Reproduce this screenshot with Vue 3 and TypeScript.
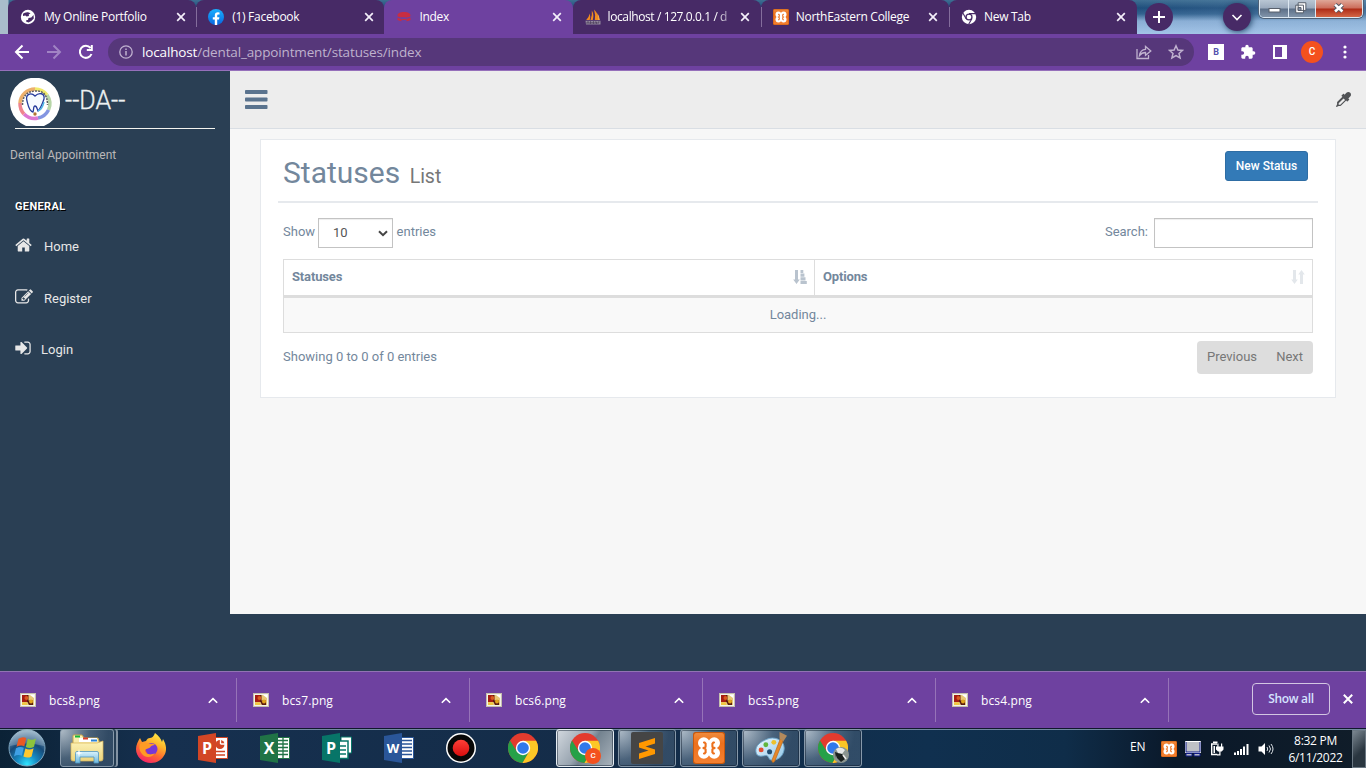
<script setup lang="ts">
interface Tab { title: string; icon: string; active?: boolean; line?: boolean; fade?: boolean }
const tabs: Tab[] = [
  { title: 'My Online Portfolio', icon: 'globe', line: true },
  { title: '(1) Facebook', icon: 'facebook' },
  { title: 'Index', icon: 'index', active: true },
  { title: 'localhost / 127.0.0.1 / d', icon: 'pma', line: true, fade: true },
  { title: 'NorthEastern College', icon: 'xampp', line: true },
  { title: 'New Tab', icon: 'chromemono' },
]
const downloads: string[] = ['bcs8.png', 'bcs7.png', 'bcs6.png', 'bcs5.png', 'bcs4.png']
interface MenuItem { label: string; icon: string; box: string; width: number }
const menu: MenuItem[] = [
  {
    label: 'Home', box: '0 0 1664 1792', width: 17,
    icon: 'M1408 992v480q0 26-19 45t-45 19h-384v-384h-256v384h-384q-26 0-45-19t-19-45v-480q0-1 .5-3t.5-3l575-474 575 474q1 2 1 6zm223-69l-62 74q-8 9-21 11h-3q-13 0-21-7l-692-577-692 577q-12 8-24 7-13-2-21-11l-62-74q-8-10-7-23.5t11-21.5l719-599q32-26 76-26t76 26l244 204v-195q0-14 9-23t23-9h192q14 0 23 9t9 23v408l219 182q10 8 11 21.5t-7 23.5z',
  },
  {
    label: 'Register', box: '0 0 1792 1792', width: 18,
    icon: 'M888 1184l116-116-152-152-116 116v56h96v96h56zm440-720q-16-16-33 1l-350 350q-17 17-1 33t33-1l350-350q17-17 1-33zm80 594v190q0 119-84.5 203.5t-203.5 84.5h-832q-119 0-203.5-84.5t-84.5-203.5v-832q0-119 84.5-203.5t203.5-84.5h832q63 0 117 25 15 7 18 23 3 17-9 29l-49 49q-14 14-32 8-23-6-45-6h-832q-66 0-113 47t-47 113v832q0 66 47 113t113 47h832q66 0 113-47t47-113v-126q0-13 9-22l64-64q15-15 35-7t20 29zm-96-738l288 288-672 672h-288v-288zm444 132l-92 92-288-288 92-92q28-28 68-28t68 28l152 152q28 28 28 68t-28 68z',
  },
  {
    label: 'Login', box: '0 0 1536 1792', width: 16,
    icon: 'M1184 896q0 26-19 45l-544 544q-19 19-45 19t-45-19-19-45v-288h-448q-26 0-45-19t-19-45v-384q0-26 19-45t45-19h448v-288q0-26 19-45t45-19 45 19l544 544q19 19 19 45zm352-352v704q0 119-84.5 203.5t-203.5 84.5h-320q-13 0-22.5-9.5t-9.5-22.5q0-4-1-20t-.5-26.5 3-23.5 10-19.5 20.5-6.5h320q66 0 113-47t47-113v-704q0-66-47-113t-113-47h-312l-11.5-1-11.5-3-8-5.5-7-9-2-13.5q0-4-1-20t-.5-26.5 3-23.5 10-19.5 20.5-6.5h320q119 0 203.5 84.5t84.5 203.5z',
  },
]
interface Task { icon: string; state?: string; letter?: string; badge?: string }
const tasks: Task[] = [
  { icon: 'explorer', state: 'open stacked' },
  { icon: 'firefox' },
  { icon: 'powerpoint', letter: 'P' },
  { icon: 'excel', letter: 'X' },
  { icon: 'publisher', letter: 'P' },
  { icon: 'word', letter: 'W' },
  { icon: 'record' },
  { icon: 'chrome' },
  { icon: 'chrome', state: 'open current', badge: 'C' },
  { icon: 'sublime', state: 'open' },
  { icon: 'xampp', state: 'open' },
  { icon: 'paint', state: 'open' },
  { icon: 'chrome', state: 'open', badge: 'photo' },
]
</script>

<template>
  <div class="screen">
    <svg class="defs" width="0" height="0" aria-hidden="true">
      <defs>
        <linearGradient id="fb" x2="0" y2="1"><stop stop-color="#19b0ff" /><stop offset="1" stop-color="#0866e0" /></linearGradient>
        <linearGradient id="xo" x2="0" y2="1"><stop stop-color="#f08a3c" /><stop offset=".35" stop-color="#ec701c" /><stop offset="1" stop-color="#f58030" /></linearGradient>
        <linearGradient id="fox" x1=".8" x2=".3" y2="1"><stop stop-color="#fff04a" /><stop offset=".35" stop-color="#ffb52a" /><stop offset=".65" stop-color="#ff6a30" /><stop offset="1" stop-color="#f5206a" /></linearGradient>
        <linearGradient id="folder" x2="0" y2="1"><stop stop-color="#fdf3b8" /><stop offset="1" stop-color="#ecd47c" /></linearGradient>
        <linearGradient id="glass" x2="0" y2="1"><stop stop-color="#d8f2fc" /><stop offset="1" stop-color="#6fb9de" /></linearGradient>
        <radialGradient id="orb" cx=".5" cy=".95" r=".95"><stop stop-color="#2fe5ff" /><stop offset=".3" stop-color="#1689c2" /><stop offset=".62" stop-color="#174a78" /><stop offset="1" stop-color="#8faec4" /></radialGradient>
        <linearGradient id="pal" x2="1" y2="1"><stop stop-color="#eef8ff" /><stop offset="1" stop-color="#8fc6e8" /></linearGradient>
        <linearGradient id="redrec" x2="0" y2="1"><stop stop-color="#ff4038" /><stop offset="1" stop-color="#d80d0d" /></linearGradient>
      </defs>
      <symbol id="i-globe" viewBox="0 0 16 16"><circle cx="8" cy="8" r="7.200" fill="#fff" /><path d="M3 4.800q2-1.800 5-1.500l2.500 1-1.800 1.200L9 7 6.500 7.600 5.500 6.500 3 7zM8.500 9l2.800-.5 2.200-2.500.3 3.500-2.500 2.500-2.800 1.500-2.500-1 .5-1.500H8z" fill="#472a66" /></symbol>
      <symbol id="i-facebook" viewBox="0 0 16 16"><circle cx="8" cy="8" r="8" fill="url(#fb)" /><path d="M6.800 16v-5.500h-2V8.200h2V6.500c0-2.100 1.200-3.200 3-3.200l1.700.1v2h-1c-1 0-1.300.5-1.300 1.200v1.600h2.200l-.4 2.300H9.200V16z" fill="#fff" /></symbol>
      <symbol id="i-index" viewBox="0 0 16 16"><path d="M1.500 6.500C1.500 4.500 4 3 8 3s6.500 1.500 6.500 3.500S11 8.500 8 8.300 1.500 8.500 1.500 6.500zM1.500 8.500q1.500 1.200 4 1.300v2.400q-2-.1-4-1.200zM6 10h4v1H6zM10.500 9.800q2.500-.1 4-1.300V11q-1.500 1.100-4 1.200z" fill="#c82d42" /></symbol>
      <symbol id="i-pma" viewBox="0 0 16 16"><path d="M6.800 1.500q2.500 4 1 9.500H5.500q2-5 1.300-9.500zM9 .5q4 4 5.500 10.500H9.800q1-5-.8-10.500zM4.700 4.500q1 3 0 6.500H1.200q2.700-2.500 3.500-6.500z" fill="#f08a20" /><path d="M12.300 4q2.200 3 2.500 7h-1.600q.3-3-.9-7z" fill="#f9b04d" /><path d="M.5 11.800h15v3.700H1z" fill="#93899e" /><path d="M2 15v-2h2v2M5.500 15v-2.500l1.500 2 1.500-2V15M10 15v-2h1.500v2M13 15v-2h1.500" stroke="#433352" fill="none" stroke-width=".7" /></symbol>
      <symbol id="i-xampp" viewBox="0 0 32 32">
        <rect width="32" height="32" rx="2.500" fill="#c8590d" /><rect x="1" y="1" width="30" height="30" rx="2.500" fill="url(#xo)" />
        <g fill="#fff"><circle cx="10.800" cy="11" r="5.800" /><circle cx="21.200" cy="11" r="5.800" /><circle cx="10.800" cy="21" r="5.800" /><circle cx="21.200" cy="21" r="5.800" /><path d="M8 11h16v10H8z" /></g>
        <path d="M11 10.500h.6l1 1.200v2.800q0 1.500-3 1.500 3 0 3 1.500v2.800l-1 1.200h-.6M21 10.500h-.6l-1 1.200v2.800q0 1.500 3 1.500-3 0-3 1.500v2.800l1 1.200h.6" fill="none" stroke="#ec701c" stroke-width="2.100" stroke-linecap="round" />
      </symbol>
      <symbol id="i-chromemono" viewBox="0 0 16 16"><circle cx="8" cy="8" r="7.200" fill="#fff" /><circle cx="8" cy="8" r="3.600" fill="#472a66" /><circle cx="8" cy="8" r="2.300" fill="#fff" /><path d="M8 4.600h7M10.900 9.700 7.500 15.500M5.100 9.700 1.700 3.800" stroke="#472a66" stroke-width="1.100" /></symbol>
      <symbol id="i-chrome" viewBox="0 0 30 30"><circle cx="15" cy="15" r="15" fill="#e33b2e" /><path d="M2 7.500 8.800 18.600 15 22l6.200-3.400L14.500 30A15 15 0 0 1 2 7.500z" fill="#26a148" /><path d="M15 7.800h13.100A15 15 0 0 1 14.500 30l6.700-11.400z" fill="#fcc726" /><circle cx="15" cy="15" r="7.200" fill="#fff" /><circle cx="15" cy="15" r="5.800" fill="#3079eb" /></symbol>
      <symbol id="i-firefox" viewBox="0 0 30 30"><path d="M19 0c4 3 6 6 7 9l1-3c3 5 4 10 2 15-3 6-8 9-14 9C7 30 0 24 0 16c0-4 2-8 4-11l2 4 4-1c1-2 2-3 4-3 3 0 4-3 5-5z" fill="url(#fox)" /><circle cx="15.500" cy="16" r="6" fill="#7838d5" /><path d="M4 11c4-2 8-1 10 0 2-.5 4 0 5 1-3 0-4 1-5 2.500-2 1.500-4 1-5 2.500 0 4 5 6 10 3-3 5-10 5-13 1C3 17 3 14 4 11z" fill="#ff9b25" /></symbol>
      <symbol id="i-explorer" viewBox="0 0 34 32"><path d="M3 4q0-1 1-1h8l2 3h14l1 3v19H3z" fill="url(#folder)" stroke="#c9a64a" /><rect x="5" y="3.500" width="5" height="2" fill="#17b53a" /><path d="M9 6h18v4H9z" fill="#fff" /><rect x="13" y="5.500" width="5" height="2" fill="#d8402e" /><rect x="21" y="7.500" width="6" height="2" fill="#2c83d8" /><path d="M1 11h26l6-2v18q0 2-2 2H3q-2 0-2-2z" fill="url(#folder)" stroke="#d8b45a" stroke-width=".7" /><path d="M5.500 31V21q0-1.500 1.500-1.500h20q1.500 0 1.500 1.500v10h-4.500v-6H10v6z" fill="url(#glass)" stroke="#4e94bf" stroke-width=".8" /><path d="m9 17 .8 3.200 3.200.8-3.200.8L9 25l-.8-3.200L5 21l3.200-.8z" fill="#fff" /></symbol>
      <symbol id="i-powerpoint" viewBox="0 0 30 30"><path d="M16 4.500h13.500v21H16z" fill="#fff" stroke="#d24625" /><circle cx="22" cy="11.500" r="4.500" fill="#d24625" /><path d="M22.500 11V6M22.500 11h5" stroke="#fff" stroke-width="1.300" /><path d="M18 18.500h9M18 22h9" stroke="#d24625" stroke-width="1.600" /><path d="M0 3 18 0v30L0 27z" fill="#d24625" /></symbol>
      <symbol id="i-excel" viewBox="0 0 30 30"><path d="M16 4.500h13.500v21H16z" fill="#fff" stroke="#207346" /><path d="M18 7.500h10M18 11h10M18 14.500h10M18 18h10M18 21.500h10M23 5v20" stroke="#207346" stroke-width="1.300" /><path d="M0 3 18 0v30L0 27z" fill="#207346" /></symbol>
      <symbol id="i-publisher" viewBox="0 0 30 30"><path d="M19 4h10.500v16H19z" fill="#fff" stroke="#077568" /><path d="M16 8h10v17.500H16z" fill="#fff" stroke="#077568" stroke-width="1.500" /><path d="M18 13h6M18 17h6M18 21h6" stroke="#077568" stroke-width="1.500" /><path d="M0 3 18 0v30L0 27z" fill="#077568" /></symbol>
      <symbol id="i-word" viewBox="0 0 30 30"><path d="M16 4.500h13.500v21H16z" fill="#fff" stroke="#2a5699" /><path d="M18 7.500h10M18 11h10M18 14.500h10M18 18h10M18 21.500h10" stroke="#2a5699" stroke-width="1.400" /><path d="M0 3 18 0v30L0 27z" fill="#2a5699" /></symbol>
      <symbol id="i-record" viewBox="0 0 30 30"><circle cx="15" cy="15" r="15" fill="#fff" /><circle cx="15" cy="15" r="13.500" fill="#080808" /><circle cx="15" cy="15" r="8.300" fill="url(#redrec)" /></symbol>
      <symbol id="i-sublime" viewBox="0 0 32 32"><rect width="32" height="32" rx="2" fill="#454545" /><path d="M8 11 24 6v5.500L14.500 14.500 24 17.500V22L8 27v-5.500l9.500-3L8 15.500z" fill="#ff9800" /></symbol>
      <symbol id="i-paint" viewBox="0 0 34 34"><path d="M12 8C20 4 31 8 31 17c0 6-4 13-13 13-4 0-3-5-6-5S2 28 1 21 7 10 12 8z" fill="url(#pal)" stroke="#6ca5ca" /><circle cx="6.500" cy="19" r="2.600" fill="#e34e32" /><circle cx="11.500" cy="13.500" r="2.600" fill="#61b63c" /><circle cx="20" cy="11" r="2.600" fill="#edc12c" /><circle cx="15.500" cy="21" r="2.700" fill="#214d72" /><path d="m27 7 3 2-9 22q-3 3-3-1z" fill="#e78727" stroke="#b4661c" stroke-width=".7" /><path d="M26 0q5 2 8 4l-4 6-4-3z" fill="#b48a5c" /></symbol>
    </svg>

    <header class="tabstrip">
      <div v-for="tab in tabs" :key="tab.title" class="tab" :class="{ active: tab.active, line: tab.line }">
        <svg class="favicon"><use :href="'#i-' + tab.icon" /></svg>
        <span class="tab-title" :class="{ fade: tab.fade }">{{ tab.title }}</span>
        <svg class="close" viewBox="0 0 10 10"><path d="m1.200 1.200 7.600 7.600m0-7.600-7.600 7.600" /></svg>
      </div>
      <div class="round"><svg viewBox="0 0 28 28"><path d="M14 8v12M8 14h12" /></svg></div>
      <div class="round search-tabs"><svg viewBox="0 0 28 28"><path d="m9.500 12 4.500 4.500 4.500-4.500" /></svg></div>
      <div class="window-buttons">
        <div class="win-min"><svg viewBox="0 0 28 18"><rect x="9" y="8.500" width="11" height="3.500" fill="#fff" stroke="#59606c" /></svg></div>
        <div class="win-max"><svg viewBox="0 0 27 18"><path d="M9.500 2.500h8v8h-8zM7 5h8v8H7z" fill="#fff" stroke="#535b67" /><path d="M9.500 7.500h3v3h-3z" fill="#8896a9" stroke="#535b67" /></svg></div>
        <div class="win-close"><svg viewBox="0 0 47 18"><path d="m19.500 4.500 7.500 7m0-7-7.500 7" stroke="#525966" stroke-width="4.600" /><path d="m19.500 4.500 7.500 7m0-7-7.500 7" stroke="#fff" stroke-width="2.600" /></svg></div>
      </div>
    </header>

    <nav class="toolbar">
      <svg class="nav-icons" viewBox="0 0 108 36" fill="none" stroke-width="2">
        <path d="M29 18H16m6.500-6.500L16 18l6.500 6.500" stroke="#fff" />
        <path d="M47 18h13m-6.500-6.500L60 18l-6.500 6.500" stroke="#a184c4" />
        <path d="M90.500 14a6 6 0 1 0 1 6M91.800 11v5h-5" stroke="#fff" />
      </svg>
      <div class="omnibox">
        <svg class="info" viewBox="0 0 14 14"><circle cx="7" cy="7" r="6.200" fill="none" stroke="#c0b2d0" stroke-width="1.300" /><path d="M7 6v4.500M7 3.400v1.500" stroke="#c0b2d0" stroke-width="1.500" /></svg>
        <span class="url"><b>localhost</b>/dental_appointment/statuses/index</span>
        <svg class="share" viewBox="0 0 16 16"><path d="M1 5v9.500h11.500V11M3.500 11.500c.5-4 3-6 6-6.200V2.500l5.300 4.500-5.300 4.300V8.500c-3 0-4.500 1-6 3z" /></svg>
        <svg class="star" viewBox="0 0 16 16"><path d="m8 1.800 1.900 4.200 4.600.4-3.500 3 1.100 4.500L8 11.500l-4.100 2.400L5 9.400l-3.500-3 4.600-.4z" /></svg>
      </div>
      <div class="ext-b">B</div>
      <svg class="puzzle" viewBox="0 0 24 24"><path d="M20.500 11H19V7c0-1.100-.9-2-2-2h-4V3.500a2.500 2.500 0 0 0-5 0V5H4c-1.100 0-2 .9-2 2v3.800h1.500a2.700 2.700 0 0 1 0 5.400H2V20c0 1.100.9 2 2 2h3.800v-1.500a2.700 2.700 0 0 1 5.400 0V22H17c1.100 0 2-.9 2-2v-4h1.500a2.500 2.500 0 0 0 0-5z" fill="#fff" /></svg>
      <div class="panel-icon"></div>
      <div class="avatar">C</div>
      <svg class="dots" viewBox="0 0 4 14" fill="#fff"><circle cx="2" cy="2" r="1.600" /><circle cx="2" cy="7" r="1.600" /><circle cx="2" cy="12" r="1.600" /></svg>
    </nav>

    <main class="page">
      <aside class="sidebar">
        <div class="brand">
          <svg class="logo" viewBox="0 0 50 48">
            <path d="M16 48A25 25 0 1 1 34 48z" fill="#fff" />
            <g fill="none" stroke-width="3.500" opacity=".75">
              <path d="M25 11A15 15 0 0 1 37 17" stroke="#ece43a" /><path d="M37 17A15 15 0 0 1 38.500 32" stroke="#a0c98c" /><path d="M38.500 32A15 15 0 0 1 28 40" stroke="#5a72d8" /><path d="M28 40A15 15 0 0 1 14 36" stroke="#d14ac4" /><path d="M14 36A15 15 0 0 1 10 25" stroke="#e95c69" /><path d="M10 25A15 15 0 0 1 25 11" stroke="#e8963b" />
            </g>
            <path d="M12.500 27q0-13 12.500-14t12.500 14" fill="none" stroke="#5c5c60" stroke-width="1.500" stroke-dasharray="2 1" />
            <path d="M25 18c-4-4-10-2-8 5 1 4 2 10 6 11 1-2 0-6 2-6s2 3 3 5c3-3 5-9 6-12 1-6-5-7-9-3z" fill="#f5fbff" stroke="#263c9c" stroke-width="1.300" />
            <path d="M28 33c3-1 5-5 6-9" stroke="#50b7e6" stroke-width="1.500" fill="none" /><circle cx="25" cy="36" r="1.700" fill="#b07432" />
          </svg>
          <span>--DA--</span>
        </div>
        <div class="rule"></div>
        <div class="tagline">Dental Appointment</div>
        <h3>GENERAL</h3>
        <a v-for="item in menu" :key="item.label" class="menu-item" :class="item.label.toLowerCase()">
          <svg :viewBox="item.box" :width="item.width" height="18"><path :d="item.icon" /></svg>
          <span>{{ item.label }}</span>
        </a>
      </aside>
      <section class="content">
        <div class="topnav">
          <svg class="bars" viewBox="0 0 23 20"><rect y="0" width="22.500" height="4" rx=".8" /><rect y="7.500" width="22.500" height="4" rx=".8" /><rect y="15" width="22.500" height="4" rx=".8" /></svg>
          <svg class="dropper" viewBox="0 0 1792 1792"><path d="M1698 94q94 94 94 226.500t-94 225.500l-225 223 104 104q10 10 10 23t-10 23l-210 210q-10 10-23 10t-23-10l-105-105-603 603q-37 37-90 37h-203l-256 128-64-64 128-256v-203q0-53 37-90l603-603-105-105q-10-10-10-23t10-23l210-210q10-10 23-10t23 10l104 104 223-225q93-94 225.500-94t226.500 94zm-1186 1442l576-576-192-192-576 576v192h192z" /></svg>
        </div>
        <div class="panel">
          <div class="panel-head">
            <h1>Statuses <small>List</small></h1>
            <button>New Status</button>
          </div>
          <div class="controls">
            <span>Show</span>
            <div class="select">10<svg viewBox="0 0 10 7"><path d="m1 1.200 4 4 4-4" /></svg></div>
            <span>entries</span>
            <span class="search-label">Search:</span>
            <input type="text" aria-label="Search">
          </div>
          <div class="table">
            <div class="th first">Statuses
              <svg viewBox="0 0 14 14"><path d="M2 0h3v9.500h1.800L3.500 14 .2 9.500H2zM7.500 0h2.800v3H7.500zM7.500 3.500h3.900v3.200H7.500zM7.500 7.200h5v3.200h-5zM7.500 10.900h6.300V14H7.500z" /></svg>
            </div>
            <div class="th">Options
              <svg class="pale" viewBox="0 0 14 14"><path d="M2 0h3v9.500h1.800L3.500 14 .2 9.500H2zM9 14h3V4.500h1.800L10.500 0 7.200 4.500H9z" /></svg>
            </div>
            <div class="loading">Loading...</div>
          </div>
          <div class="table-foot">
            <span>Showing 0 to 0 of 0 entries</span>
            <div class="pager"><span>Previous</span><span>Next</span></div>
          </div>
        </div>
      </section>
    </main>

    <div class="downloads">
      <div v-for="file in downloads" :key="file" class="download">
        <svg class="thumb" viewBox="0 0 16 14"><rect x=".5" y=".5" width="15" height="13" fill="#f5f3e8" stroke="#c4bfae" /><path d="M2 2h12v10H2z" fill="#e8c877" /><path d="M2 2h6.500v5.500H13V12H9L7.500 9H2z" fill="#5a1c10" /><path d="M2 2h5v7H2z" fill="#a51c12" /><circle cx="6.500" cy="5" r="2" fill="#d85a1f" /><circle cx="11" cy="8.500" r="2" fill="#e2a51e" /><path d="M2 9.500h5V12H2z" fill="#f0c840" /><path d="M10 2h4v3z" fill="#fff" /></svg>
        <span>{{ file }}</span>
        <svg class="up" viewBox="0 0 10 7"><path d="m.8 5.800 4.200-4.200 4.200 4.200" /></svg>
      </div>
      <button class="show-all">Show all</button>
      <svg class="bar-close" viewBox="0 0 10 10"><path d="m.8.8 8.400 8.400m0-8.400L.8 9.200" /></svg>
    </div>

    <footer class="taskbar">
      <svg class="start" viewBox="0 0 38 38">
        <circle cx="19" cy="19" r="18" fill="url(#orb)" stroke="#7ea6bf" />
        <path d="M2 17A17 17 0 0 1 36 17Q19 12 2 17z" fill="#fff" opacity=".22" />
        <path d="M10.500 9.800q4-2.600 7.800-.7l-2 8.100q-3.600-1.700-7.800.5z" fill="#ea5a24" /><path d="M19.800 9.800q4.200 2.200 8.200-.3l-2 8.200q-4 2.300-8.200.2z" fill="#8dc43d" /><path d="M8 19.300q4-2.300 7.800-.5l-2 8q-3.800-1.800-7.800.6z" fill="#3fa0e5" /><path d="M17.400 19.400q4 2.200 8.200-.2l-2 8.200q-4 2.300-8.200.1z" fill="#fdc82f" />
      </svg>
      <div v-for="(task, i) in tasks" :key="i" class="task" :class="[task.state, task.icon]">
        <div class="task-icon">
          <svg><use :href="'#i-' + task.icon" /></svg>
          <span v-if="task.letter" class="letter">{{ task.letter }}</span>
          <span v-if="task.badge === 'C'" class="badge">C</span>
          <svg v-if="task.badge === 'photo'" class="photo" viewBox="0 0 16 16"><circle cx="8" cy="8" r="8" fill="#8b9590" /><path d="M3 2q5-3 9 1L9 7 5 6z" fill="#e6e9e8" /><path d="m4 6 5 1 3 5-4 3-4-4zM2 5l3 1-2 5z" fill="#1b211f" /><path d="m10 8 3 4" stroke="#eee" stroke-width="1.500" /></svg>
        </div>
      </div>
      <div class="tray">
        <span class="lang">EN</span>
        <svg class="tray-x"><use href="#i-xampp" /></svg>
        <svg class="tray-pc" viewBox="0 0 16 16"><path d="M.5.500h15v11H.5z" fill="#bfc1c5" stroke="#fff" /><path d="M1 1v10h14V1" fill="none" stroke="#17238f" /><path d="M1 12.500h6v2.500H1zM9 12.500h6v2.500H9z" fill="#b8bac6" stroke="#101c86" /></svg>
        <svg class="tray-plug" viewBox="0 0 14 15"><path d="M7 3H1.700v10.500h5.600M3 1.200h4.500" fill="none" stroke="#fff" stroke-width="1.400" /><path d="M6 5.500h7.500v3L11.700 10.500H8L6 8.500zM7.300 2.500h1.200v3H7.300zM11 2.500h1.200v3H11zM9.300 10h1.200v4.500H7v-1.200h2.300z" fill="#fff" /><path d="M3.500 5h1.500v7H3.500z" fill="#fff" /></svg>
        <svg class="tray-net" viewBox="0 0 15 12"><path d="M1 9.500V12M4 8v4M7 6v6M10 3.500V12M13.500 1v11" stroke="#fff" stroke-width="2" /></svg>
        <svg class="tray-vol" viewBox="0 0 16 14"><path d="M.5 4.500h3L7 1v12L3.500 9.500h-3z" fill="#fff" /><path d="M9 5q1.500 2 0 4M11 3.500q3 3.500 0 7M13 2q4 5 0 10" stroke="#e0e5e9" fill="none" /></svg>
        <div class="clock"><span>8:32 PM</span><span>6/11/2022</span></div>
        <div class="peek"></div>
      </div>
    </footer>
  </div>
</template>

<style>
body { margin: 0; overflow: hidden; }
</style>

<style scoped>
* { box-sizing: border-box; }
.screen { width: 1366px; height: 768px; display: flex; flex-direction: column; overflow: hidden; background: #2a3f54; font-family: "Open Sans", "Noto Sans", sans-serif; font-size: 12px; }
.screen svg { flex: none; display: block; }
.screen .defs { display: block; position: absolute; }
button { font: inherit; }

.tabstrip { height: 34px; flex: none; display: flex; align-items: center; padding-left: 8px; background: linear-gradient(90deg, #a9bdcb 0, #a9bdcb 8px, transparent 9px, transparent 1130px, rgba(160, 195, 225, .25) 1366px), linear-gradient(#3e6e92 0, #1e4d7b 8px, #32628f 14px, #89add4 21px, #a3c4e8 34px); }
.tab { width: 188.200px; height: 34px; flex: none; display: flex; align-items: center; padding-left: 12px; background: #472a66; color: #fff; border-radius: 8px 8px 0 0; position: relative; }
.tab.active { background: #6e41a0; }
.tab.line::after { content: ""; position: absolute; right: -1px; top: 7px; width: 1px; height: 20px; background: #846d9c; z-index: 1; }
.favicon { width: 16px; height: 16px; }
.tab-title { width: 124px; margin-left: 8px; white-space: nowrap; letter-spacing: -.28px; line-height: 18px; }
.tab:nth-child(n+3) .tab-title { margin-left: 7px; margin-right: 1px; }
.tab.line .tab-title.fade { letter-spacing: -.4px; -webkit-mask-image: linear-gradient(90deg, #000 108px, transparent 130px); mask-image: linear-gradient(90deg, #000 108px, transparent 130px); }
.close { width: 10px; height: 10px; margin-left: 7.500px; stroke: #f4effa; stroke-width: 1.700; }
.round { width: 28px; height: 28px; margin-left: 8px; border-radius: 50%; background: #472a66; flex: none; }
.round svg { width: 28px; height: 28px; fill: none; stroke: #fff; stroke-width: 2; }
.search-tabs { margin-left: 50px; box-shadow: 1px 1px 6px #234467; }
.search-tabs svg { stroke-width: 1.600; }
.window-buttons { align-self: flex-start; display: flex; height: 18px; margin-left: 8px; border: 1px solid #dce8f2; border-top: 0; border-radius: 0 0 5px 5px; box-shadow: 0 0 0 1px #4e6177; overflow: hidden; }
.window-buttons > div { height: 18px; background: linear-gradient(#b9c6d4 0, #9baabd 8px, #5d7088 9px, #8598ae 18px); border-right: 1px solid #dce7f1; }
.window-buttons svg { height: 18px; fill: none; }
.win-min svg { width: 28px; }
.win-max svg { width: 26px; }
.window-buttons .win-close { background: linear-gradient(#dfa798 0, #cc6d5b 8px, #ae2c17 9px, #d86d4b 18px); border: 0; }
.win-close svg { width: 46px; }

.toolbar { height: 37px; flex: none; display: flex; align-items: center; background: #6e41a0; border-bottom: 1px solid #9670bb; }
.nav-icons { width: 108px; height: 36px; }
.omnibox { width: 1086px; height: 28px; border-radius: 14px; background: #56377a; display: flex; align-items: center; padding: 0 10px 0 11px; }
.info { width: 14px; height: 14px; }
.url { margin-left: 9px; flex: 1; font-size: 13.500px; color: #bfb2cd; letter-spacing: -.15px; white-space: nowrap; padding-bottom: 1px; }
.url b { font-weight: 400; color: #fff; }
.share, .star { width: 16px; height: 16px; fill: none; stroke: #c0b2cf; stroke-width: 1.300; }
.star { margin-left: 16px; stroke-width: 1.500; }
.ext-b { width: 16px; height: 16px; margin-left: 14px; background: #fff; color: #5450ad; font: 700 9px/16px Roboto, sans-serif; text-align: center; }
.puzzle { width: 16px; height: 16px; margin-left: 16px; }
.panel-icon { width: 14px; height: 14px; margin-left: 17px; border: 2px solid #fff; border-right-width: 5px; }
.avatar { width: 22px; height: 22px; margin-left: 14px; border-radius: 50%; background: #f4511e; color: #fff; text-align: center; font: 500 10px/22px Roboto, sans-serif; }
.dots { width: 4px; height: 14px; margin-left: 20px; }

.page { height: 600px; flex: none; display: flex; font-family: Roboto, sans-serif; font-size: 13px; color: #73879c; }
.sidebar { width: 230px; flex: none; background: #2a3f54; color: #e7e7e7; display: flex; flex-direction: column; }
.brand { height: 57px; padding: 7px 0 0 10px; display: flex; color: #ecf0f1; font-size: 25px; line-height: 46px; font-weight: 300; }
.brand span { -webkit-text-stroke: .3px #ecf0f1; }
.logo { width: 50px; height: 48px; margin-right: 5px; }
.rule { height: 1px; margin: 0 15px; background: #f4f4ef; }
.tagline { margin: 18px 0 0 10px; height: 16px; line-height: 16px; font-size: 12px; color: #bab8b8; }
h3 { margin: 36px 0 0 15px; font-size: 11px; line-height: 15px; font-weight: 700; letter-spacing: .35px; color: #fff; text-shadow: 1px 1px #000; }
.menu-item { display: flex; align-items: flex-start; height: 52px; padding: 22px 0 0 15px; line-height: 20px; }
.menu-item svg { fill: #e7e7e7; margin-right: 12px; }
.menu-item span { padding-top: 1px; }
.menu-item.register svg { margin-right: 11px; }
.menu-item.login svg { margin-right: 10px; margin-top: -1px; }
.menu-item.login span { padding-top: 0; }
.content { flex: 1; height: 543px; background: #f7f7f7; }
.topnav { height: 58px; background: #ededed; border-bottom: 1px solid #d9dee4; display: flex; justify-content: space-between; align-items: center; padding: 0 15px; }
.bars { width: 23px; height: 20px; fill: #5a738e; margin-top: 1px; }
.dropper { width: 15px; height: 15px; fill: #515356; }
.panel { height: 259px; margin: 10px 30px 0; background: #fff; border: 1px solid #e6e9ed; padding: 0 17px; }
.panel-head { height: 63px; border-bottom: 2px solid #e6e9ed; display: flex; justify-content: space-between; align-items: flex-start; padding: 11px 10px 0 5px; }
h1 { margin: 0; font-size: 30px; line-height: 43px; font-weight: 400; white-space: nowrap; }
small { font-size: 19.500px; color: #777; margin-left: 2px; }
.panel-head button { width: 83px; height: 30px; padding: 0; border: 1px solid #2e6da4; border-radius: 3px; background: #337ab7; color: #fff; font-size: 12px; font-weight: 500; line-height: 28px; }
.controls { height: 30px; margin: 15px 5px 0; display: flex; line-height: 27px; }
.select { width: 75px; height: 30px; margin: 0 3.500px 0 3px; border: 1px solid #c3c3c3; padding: 0 4px 0 14px; line-height: 28px; color: #555; display: flex; align-items: center; justify-content: space-between; box-shadow: inset 0 1px 1px #eee; }
.select svg { width: 10px; height: 7px; margin-top: 1px; fill: none; stroke: #444; stroke-width: 2; }
.search-label { margin-left: auto; }
input { width: 159px; height: 30px; margin-left: 6px; border: 1px solid #c3c3c3; box-shadow: inset 0 1px 1px #eee; background: #fff; }
.table { height: 74px; margin: 11px 5px 0; display: grid; grid-template-columns: 531px 1fr; grid-template-rows: 38px 1fr; border: 1px solid #ddd; }
.th { border-bottom: 3px solid #ddd; padding: 0 7px 2px 8px; display: flex; justify-content: space-between; align-items: center; font-weight: 700; line-height: 33px; letter-spacing: -.15px; }
.th.first { border-right: 1px solid #ddd; }
.th svg { width: 14px; height: 14px; fill: #b9c3ce; }
.th .pale { fill: #e3e7eb; }
.loading { grid-column: 1 / 3; background: #f9f9f9; text-align: center; line-height: 34px; }
.table-foot { display: flex; justify-content: space-between; margin: 8px 5px 0; line-height: 31px; }
.pager { width: 116px; height: 33px; padding: 0 10px; background: #ddd; border-radius: 4px; display: flex; justify-content: space-between; color: #777; }

.downloads { height: 57px; flex: none; background: #6e41a0; border-top: 1px solid #9173b3; display: flex; align-items: center; padding-left: 4px; color: #fff; }
.download { width: 233px; height: 44px; border-right: 1px solid #9673b8; display: flex; align-items: center; padding: 0 18px 0 16px; }
.thumb { width: 16px; height: 14px; }
.download span { flex: 1; margin-left: 13px; letter-spacing: .12px; padding-top: 1px; }
.up { width: 10px; height: 7px; fill: none; stroke: #fff; stroke-width: 1.600; }
.show-all { width: 78px; height: 32px; margin: 0 0 2px 83px; padding: 0 0 2px; background: transparent; border: 1px solid #d3c6e2; border-radius: 4px; color: #d5e3ff; font-weight: 600; letter-spacing: -.3px; }
.bar-close { width: 10px; height: 10px; margin: 0 0 2px 13px; stroke: #fff; stroke-width: 2; }

.taskbar { height: 40px; flex: none; display: flex; border-top: 1px solid #10182c; box-shadow: inset 0 1px #7288a1; background: linear-gradient(90deg, #0b2236, #16304f 12%, #142c48 45%, #10304f 68%, #0f2d49 78%, #0a1829 86%, #101d29 100%); color: #fff; }
.start { width: 38px; height: 38px; margin: 0 12px 0 8px; }
.task { width: 62px; height: 38px; flex: none; display: flex; justify-content: center; align-items: center; position: relative; }
.task.open { width: 58px; height: 38px; margin: 0 2px; border: 1px solid #8799aa; border-radius: 3px; box-shadow: inset 0 0 0 1px rgba(10, 25, 42, .45); background: radial-gradient(circle at 0 0, rgba(215, 225, 233, .8), rgba(130, 153, 174, .5) 45%, rgba(70, 95, 120, .6) 75%); }
.task.current { border-color: #e6edf3; background: linear-gradient(125deg, #d3d9df, #98a4b0 45%, #73828f 55%, #aab4bd); }
.task.stacked { width: 54px; margin-right: 6px; box-shadow: 2px 0 #253d54, 4px 0 #8292a2; }
.task-icon { width: 30px; height: 30px; position: relative; }
.task-icon > svg { width: 30px; height: 30px; }
.explorer .task-icon { width: 34px; height: 32px; }
.explorer .task-icon > svg { width: 34px; height: 32px; }
.sublime .task-icon, .xampp .task-icon { width: 32px; height: 32px; }
.sublime .task-icon > svg, .xampp .task-icon > svg { width: 32px; height: 32px; }
.paint .task-icon, .paint .task-icon > svg { width: 32px; height: 32px; }
.letter { position: absolute; left: 2px; top: 4px; width: 14px; text-align: center; font: 700 16px/22px "Open Sans", sans-serif; }
.word .letter { font-size: 13px; }
.badge { position: absolute; left: 15px; top: 15px; width: 16px; height: 16px; border-radius: 50%; background: #f4511e; font: 500 8px/16px Roboto, sans-serif; text-align: center; }
.task-icon > .photo { position: absolute; left: 15px; top: 14px; width: 16px; height: 16px; }
.tray { flex: 1; display: flex; align-items: center; padding-left: 266px; }
.lang { width: 31px; letter-spacing: -.2px; padding-bottom: 5px; }
.tray-x { width: 16px; height: 16px; }
.tray-pc { width: 16px; height: 16px; margin-left: 8px; }
.tray-plug { width: 14px; height: 15px; margin-left: 9px; }
.tray-net { width: 15px; height: 12px; margin-left: 10px; }
.tray-vol { width: 16px; height: 14px; margin-left: 9px; }
.clock { flex: 1; display: flex; flex-direction: column; text-align: center; line-height: 17px; letter-spacing: -.3px; padding-left: 5px; }
.peek { width: 14px; height: 38px; border: 1px solid #6b7883; background: linear-gradient(135deg, #7b8791, #2a3640 60%); }
</style>
